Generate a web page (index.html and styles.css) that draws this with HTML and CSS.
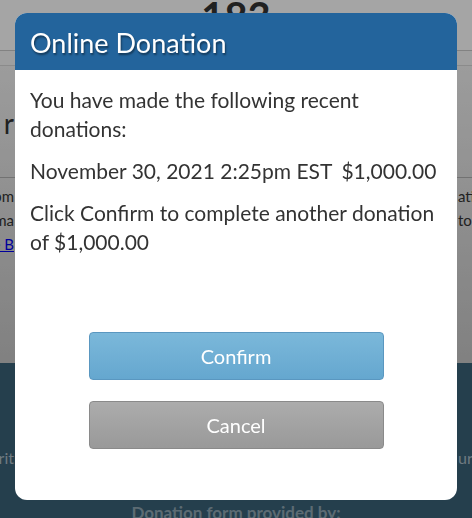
FILE: index.html
```html
<!DOCTYPE html>
<html lang="en">
<head>
    <meta charset="UTF-8">
    <meta name="viewport" content="width=device-width, initial-scale=1.0">
    <title>Online Donation</title>
    <link rel="stylesheet" href="styles.css">
</head>
<body>
    <div class="page">
        <div class="top">
            <div class="count">183</div>
        </div>
        <div class="subbar"></div>
        <div class="content">
            <div class="row heading">
                <span class="left">Join us in making a r</span>
                <span class="right"></span>
            </div>
            <div class="info">
                <div class="row">
                    <span class="left">Please subm</span>
                    <span class="right">ations will be submitted to the foundation</span>
                </div>
                <div class="row">
                    <span class="left">For more informa</span>
                    <span class="right">to stay up to date</span>
                </div>
                <div class="row">
                    <span class="left"><a href="#">See the B</a></span>
                    <span class="right"></span>
                </div>
            </div>
        </div>
        <div class="footer">
            <div class="row footer-line">
                <span class="left">Your gift supports our charit</span>
                <span class="right">ur community</span>
            </div>
            <p class="provided">Donation form provided by:</p>
        </div>
    </div>

    <div class="overlay"></div>

    <div class="modal">
        <div class="modal-header">Online Donation</div>
        <div class="modal-body">
            <p>You have made the following recent donations:</p>
            <p class="recent"><span>November 30, 2021 2:25pm EST</span><span>$1,000.00</span></p>
            <p>Click Confirm to complete another donation of $1,000.00</p>
        </div>
        <div class="modal-actions">
            <button class="btn btn-confirm">Confirm</button>
            <button class="btn btn-cancel">Cancel</button>
        </div>
    </div>
</body>
</html>
```

FILE: styles.css
```css
body {
    margin: 0;
    font-family: Lato, "Open Sans", sans-serif;
    background-color: #f4f4f4;
    color: #333;
    overflow: hidden;
}

.page {
    height: 518px;
    display: flex;
    flex-direction: column;
}

.top {
    height: 50px;
    border-bottom: 1px solid #c8c8c8;
    background: #fdfdfd;
    display: flex;
    justify-content: center;
    overflow: hidden;
}

.count {
    font-size: 40px;
    font-weight: bold;
    color: #333;
    margin-top: -8px;
}

.subbar {
    height: 14px;
    background: #f4f4f4;
    border-bottom: 1px solid #d6d6d6;
}

.content {
    flex: 1;
    background: linear-gradient(#f0f0f0, #c6c6c6);
    overflow: hidden;
}

/* side fragments of the page peeking out from behind the dialog */
.row {
    display: flex;
    justify-content: space-between;
    white-space: nowrap;
}

.row .left {
    width: 14px;
    display: flex;
    justify-content: flex-end;
}

.row .right {
    width: 14px;
}

.heading {
    font-size: 28px;
    line-height: 34px;
    margin-top: 40px;
    padding-bottom: 37px;
    border-bottom: 1px solid #b0b0b0;
}

.info .row {
    font-size: 15px;
    line-height: 24px;
}

.info .row:first-child {
    margin-top: 6px;
}

.info a {
    color: #0000ee;
}

.footer {
    height: 155px;
    background: #3a6177;
    text-align: center;
    color: #a9bcc6;
    display: flex;
    flex-direction: column;
    justify-content: flex-end;
    overflow: hidden;
}

.footer-line {
    margin-bottom: 35px;
    font-size: 16px;
}

.provided {
    margin: 0 0 -5px;
    font-size: 17px;
    font-weight: bold;
    color: #8ea5b1;
}

.overlay {
    position: fixed;
    inset: 0;
    background: rgba(0, 0, 0, 0.35);
}

.modal {
    position: absolute;
    top: 13px;
    left: 15px;
    width: 442px;
    height: 487px;
    background: #fff;
    border-radius: 12px;
    overflow: hidden;
    display: flex;
    flex-direction: column;
}

.modal-header {
    background: #23649c;
    color: #fff;
    font-size: 27px;
    height: 57px;
    line-height: 59px;
    padding-left: 15px;
    text-shadow: 1px 2px 2px rgba(0, 0, 0, 0.45);
}

.modal-body {
    padding: 15px 15px 0;
    font-size: 21px;
    line-height: 29px;
    color: #333;
}

.modal-body p {
    margin: 0 0 13px;
}

.recent span + span {
    margin-left: 9px;
}

.modal-actions {
    display: flex;
    flex-direction: column;
    align-items: center;
    gap: 21px;
    margin-top: 63px;
}

.btn {
    width: 295px;
    height: 48px;
    border-radius: 4px;
    font-family: inherit;
    font-size: 20px;
    color: #fff;
    cursor: pointer;
}

.btn-confirm {
    background: linear-gradient(#7bb8da, #65a7cf);
    border: 1px solid #5a97c0;
}

.btn-cancel {
    background: linear-gradient(#acacac, #999);
    border: 1px solid #8a8a8a;
}
```
